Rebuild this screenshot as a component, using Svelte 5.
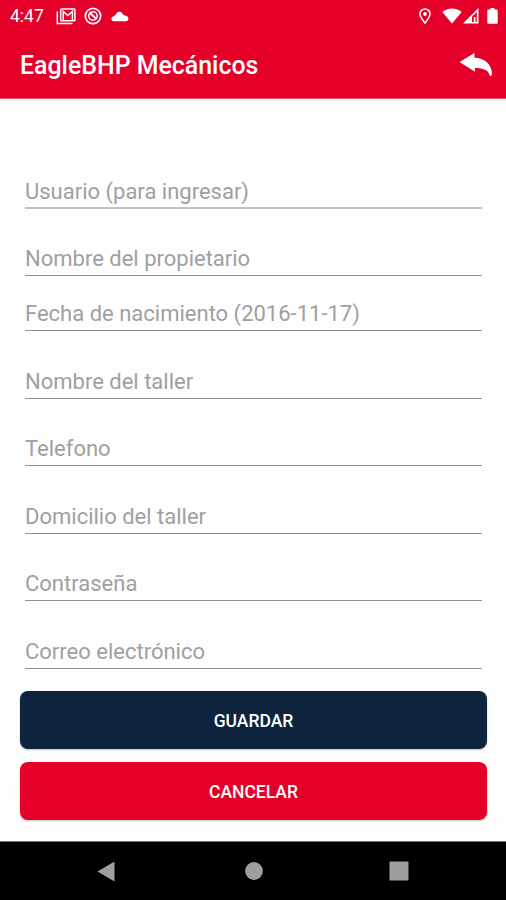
<script lang="ts">
  type Field = { name: string; label: string; type?: string; tight?: boolean };

  const fields: Field[] = [
    { name: 'usuario', label: 'Usuario (para ingresar)' },
    { name: 'propietario', label: 'Nombre del propietario' },
    { name: 'nacimiento', label: 'Fecha de nacimiento (2016-11-17)', tight: true },
    { name: 'taller', label: 'Nombre del taller' },
    { name: 'telefono', label: 'Telefono', type: 'tel' },
    { name: 'domicilio', label: 'Domicilio del taller' },
    { name: 'clave', label: 'Contraseña', type: 'password' },
    { name: 'correo', label: 'Correo electrónico', type: 'email' },
  ];

  let values = $state<Record<string, string>>({});

  function clear() {
    values = {};
  }
</script>

<div class="screen">
  <header>
    <div class="status">
      <span class="clock">4:47</span>
      <svg class="gmail" width="20" height="17" viewBox="0 0 20 17" fill="none" stroke="#fff">
        <path d="M1.3 3.5v12.1h15.2" stroke-width="1.5" />
        <rect x="4.7" y="1" width="14.2" height="11.8" rx=".8" stroke-width="1.5" />
        <path d="M7.2 12.5V3.500l4.600 4 4.600-4v9" stroke-width="1.500" />
      </svg>
      <svg class="sync" width="18" height="18" viewBox="0 0 18 18" fill="none" stroke="#fff">
        <circle cx="9" cy="9" r="7.7" stroke-width="1.7" />
        <circle cx="9" cy="9" r="4.200" stroke-width="1.500" />
        <path d="M5.500 5.500l7 6.500" stroke-width="2" />
      </svg>
      <svg class="cloud" width="18" height="12" viewBox="0 0 18 12" fill="#fff">
        <path d="M2.600 11.200C-.2 11-.3 7.500 2.200 6.600 3.700 6.100 4.500 5 5.500 3.300 6.600 1.200 9.800 1.200 11.200 3.200c.8 1.200 1.400 1.900 3 2.200 4.300.9 4 5.700.8 5.800z" />
      </svg>
      <svg class="pin" width="12" height="16" viewBox="0 0 12 16" fill="none" stroke="#fff">
        <path d="M6 15C3.500 11.800 1 8.700 1 5.900a5 5 0 0 1 10 0C11 8.700 8.500 11.800 6 15z" stroke-width="1.5" />
        <circle cx="6" cy="5.900" r="1.900" fill="#fff" stroke="none" />
      </svg>
      <svg class="wifi" width="20" height="16" viewBox="0 0 20 16" fill="#fff">
        <path d="M.3 4C5.500-.7 14.500-.7 19.700 4L10 15.500z" />
      </svg>
      <svg class="signal" width="16" height="16" viewBox="0 0 16 16" fill="#fff">
        <path fill-rule="evenodd" d="M15.500 0v15.500H0zM13.800 4 9 8.800V14h4.800z" />
        <path d="M10.800 9h1.700v5h-1.700z" />
      </svg>
      <svg class="battery" width="11" height="16" viewBox="0 0 11 16" fill="#fff">
        <path d="M3.500 0h4v1.600h2q1.200 0 1.200 1.200v11.900q0 1.100-1.200 1.100h-8q-1.200 0-1.200-1.100V2.800q0-1.200 1.200-1.200h2z" />
      </svg>
    </div>
    <div class="toolbar">
      <h1>EagleBHP Mecánicos</h1>
      <button class="back" aria-label="Volver">
        <svg width="34" height="25" viewBox="0 0 34 25" fill="#fff">
          <path d="M.6 9.100 15.500.1v4.700C25.500 5 32 10.800 32.900 19.500c.2 2-.2 3.500-1.300 3.500-1 0-1-1.300-1.700-2.600-2-3.800-7-5.300-13.900-5.300v3.600z" />
        </svg>
      </button>
    </div>
  </header>

  <main>
    {#each fields as field}
      <input
        class:tight={field.tight}
        name={field.name}
        type={field.type ?? 'text'}
        placeholder={field.label}
        aria-label={field.label}
        bind:value={values[field.name]}
      />
    {/each}

    <div class="actions">
      <button class="btn save">GUARDAR</button>
      <button class="btn cancel" onclick={clear}>CANCELAR</button>
    </div>
  </main>

  <nav>
    <svg width="18" height="21" viewBox="0 0 18 21"><path d="M17.500 .5v20L.5 10.500z" /></svg>
    <svg class="home" width="18" height="18" viewBox="0 0 18 18"><circle cx="9" cy="9" r="8.900" /></svg>
    <svg width="20" height="20" viewBox="0 0 20 20"><rect x=".5" y=".5" width="19" height="19" rx="1" /></svg>
  </nav>
</div>

<style>
  :global(body) { background: #fff; }
  .screen { width: 506px; height: 900px; display: flex; flex-direction: column; background: #fefefe; font-family: Roboto, sans-serif; overflow: hidden; }
  header { height: 99px; flex: none; box-sizing: border-box; border-bottom: 1px solid #e8525f; background: #e50029; color: #fff; }
  .status { display: flex; align-items: center; height: 32px; padding: 0 8px 0 10px; }
  .clock { width: 46px; font-size: 17.5px; line-height: 32px; }
  .status svg { flex: none; }
  .sync { margin-left: 8px; }
  .cloud { margin-left: 9px; }
  .pin { margin-left: auto; }
  .wifi { margin-left: 11px; }
  .signal { margin-left: 1px; }
  .battery { margin-left: 8px; }
  .toolbar { display: flex; align-items: center; justify-content: space-between; height: 67px; padding: 0 13px 0 20px; }
  h1 { margin: 0; font-size: 24.9px; font-weight: 500; line-height: 67px; }
  .back { display: flex; padding: 0; border: 0; background: none; cursor: pointer; }

  main { flex: 1; display: flex; flex-direction: column; padding: 42px 19px 0 20px; }
  input { box-sizing: border-box; height: 55px; margin: 12.5px 5px 0; padding: 21.3px 0 0; border: 0; border-bottom: 1px solid #8f8f8f; border-radius: 0; outline: 0; background: none; color: #222; font-family: inherit; font-size: 22px; }
  input:first-child { padding-top: 22.3px; border-bottom: 2px solid #c2c2c2; }
  input::placeholder { color: #a0a0a0; opacity: 1; }
  input.tight { margin-top: 0; }
  .actions { display: flex; flex-direction: column; gap: 13px; margin-top: 22px; }
  .btn { height: 58px; padding: 2px 0 0; border: 0; border-radius: 8px; color: #fff; font-family: inherit; font-size: 17.5px; font-weight: 500; cursor: pointer; box-shadow: 0 1px 2px rgba(0, 0, 0, .25); }
  .save { background: #0d233e; }
  .cancel { background: #e50029; }

  nav { box-sizing: border-box; height: 59px; flex: none; display: flex; align-items: center; justify-content: space-between; padding: 0 97px; border-top: 1px solid #777; background: #000; fill: #9e9e9e; }
  .home { margin-left: 3px; }
</style>
